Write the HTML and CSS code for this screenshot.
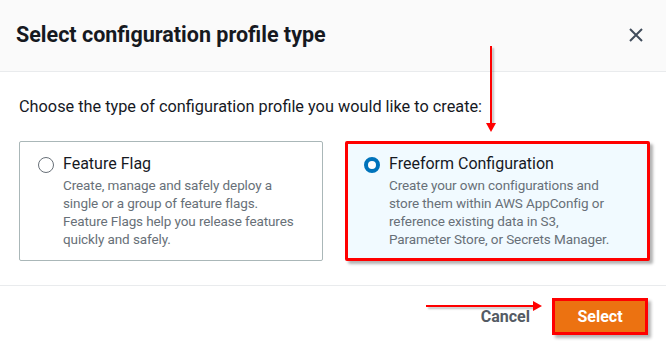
FILE: index.html
```html
<!DOCTYPE html>
<html lang="en">
  <head>
    <meta charset="UTF-8" />
    <title>Select configuration profile type</title>
    <link rel="stylesheet" href="styles.css">
  </head>
  <body>
    <div class="modal">
      <div class="modal-header">
        <h2>Select configuration profile type</h2>
        <button class="close" aria-label="Close">
          <svg width="16" height="16" viewBox="0 0 16 16">
            <path d="M2 2l12 12M14 2L2 14" stroke="#414d5c" stroke-width="2" fill="none" />
          </svg>
        </button>
      </div>

      <div class="modal-body">
        <p class="intro">Choose the type of configuration profile you would like to create:</p>
        <div class="tiles">
          <label class="tile">
            <span class="radio"></span>
            <span class="tile-text">
              <span class="tile-title">Feature Flag</span>
              <span class="tile-desc">Create, manage and safely deploy a single or a group of feature flags. Feature Flags help you release features quickly and safely.</span>
            </span>
          </label>
          <label class="tile checked">
            <span class="radio"></span>
            <span class="tile-text">
              <span class="tile-title">Freeform Configuration</span>
              <span class="tile-desc">Create your own configurations and store them within AWS AppConfig or reference existing data in S3,<br>Parameter Store, or Secrets Manager.</span>
            </span>
          </label>
        </div>
      </div>

      <div class="modal-footer">
        <button class="btn-link">Cancel</button>
        <button class="btn-primary">Select</button>
      </div>

      <!-- annotation arrows -->
      <div class="arrow arrow-down"></div>
      <div class="arrow arrow-right"></div>
    </div>
  </body>
</html>
```

FILE: styles.css
```css
* {
  margin: 0;
  padding: 0;
  box-sizing: border-box;
}

body {
  font-family: Roboto, "Noto Sans", sans-serif;
  background: #ffffff;
  color: #16191f;
}

.modal {
  position: relative;
  width: 666px;
  height: 344px;
}

.modal-header {
  height: 72px;
  background: #fafafa;
  border-bottom: 1px solid #e9ebed;
  display: flex;
  align-items: center;
  justify-content: space-between;
  padding: 0 22px 2px 16px;
}

.modal-header h2 {
  font-size: 21.5px;
  font-weight: 700;
  color: #16191f;
}

.close {
  border: none;
  background: none;
  display: flex;
}

.modal-body {
  padding: 25px 16px 24px 19px;
  border-bottom: 1px solid #e9ebed;
}

.intro {
  font-size: 16.3px;
  color: #16191f;
  margin-bottom: 25px;
}

.tiles {
  display: flex;
  gap: 22px;
}

.tile {
  flex: none;
  width: 304px;
  height: 120px;
  display: flex;
  gap: 9px;
  padding: 12px 18px;
  border: 1px solid #aab7b8;
  border-radius: 2px;
}

.tile.checked {
  flex: 1;
  min-width: 0;
  background: #f1faff;
  border: 3px solid #ff0000;
  padding: 10px 16px;
  box-shadow: 3px 3px 3px rgba(0, 0, 0, 0.3);
}

.radio {
  flex: none;
  width: 16px;
  height: 16px;
  margin-top: 3px;
  border: 1px solid #687078;
  border-radius: 50%;
  background: #fff;
}

.tile.checked .radio {
  border: 4px solid #0073bb;
}

.tile-text {
  display: flex;
  flex-direction: column;
}

.tile-title {
  font-size: 16px;
  color: #16191f;
  margin-bottom: 3px;
}

.tile-desc {
  font-size: 13.5px;
  letter-spacing: -0.1px;
  line-height: 18px;
  color: #687078;
}

.modal-footer {
  display: flex;
  justify-content: flex-end;
  align-items: center;
  gap: 22px;
  padding: 12px 18px 0 0;
}

.btn-link {
  border: none;
  background: none;
  font-family: inherit;
  font-size: 16px;
  font-weight: 700;
  color: #545b64;
}

.btn-primary {
  font-family: inherit;
  font-size: 16px;
  font-weight: 700;
  color: #ffffff;
  background: #ec7211;
  border: 3px solid #ff0000;
  width: 96px;
  height: 37px;
  box-shadow: 3px 3px 3px rgba(0, 0, 0, 0.3);
}

.arrow {
  position: absolute;
  background: #ff0000;
  box-shadow: 2px 2px 2px rgba(0, 0, 0, 0.25);
}

.arrow-down {
  left: 490px;
  top: 46px;
  width: 2px;
  height: 78px;
}

.arrow-down::after {
  content: "";
  position: absolute;
  left: -4px;
  bottom: -8px;
  border-left: 5px solid transparent;
  border-right: 5px solid transparent;
  border-top: 9px solid #ff0000;
}

.arrow-right {
  left: 426px;
  top: 305px;
  width: 108px;
  height: 2px;
}

.arrow-right::after {
  content: "";
  position: absolute;
  right: -8px;
  top: -4px;
  border-top: 5px solid transparent;
  border-bottom: 5px solid transparent;
  border-left: 9px solid #ff0000;
}
```
